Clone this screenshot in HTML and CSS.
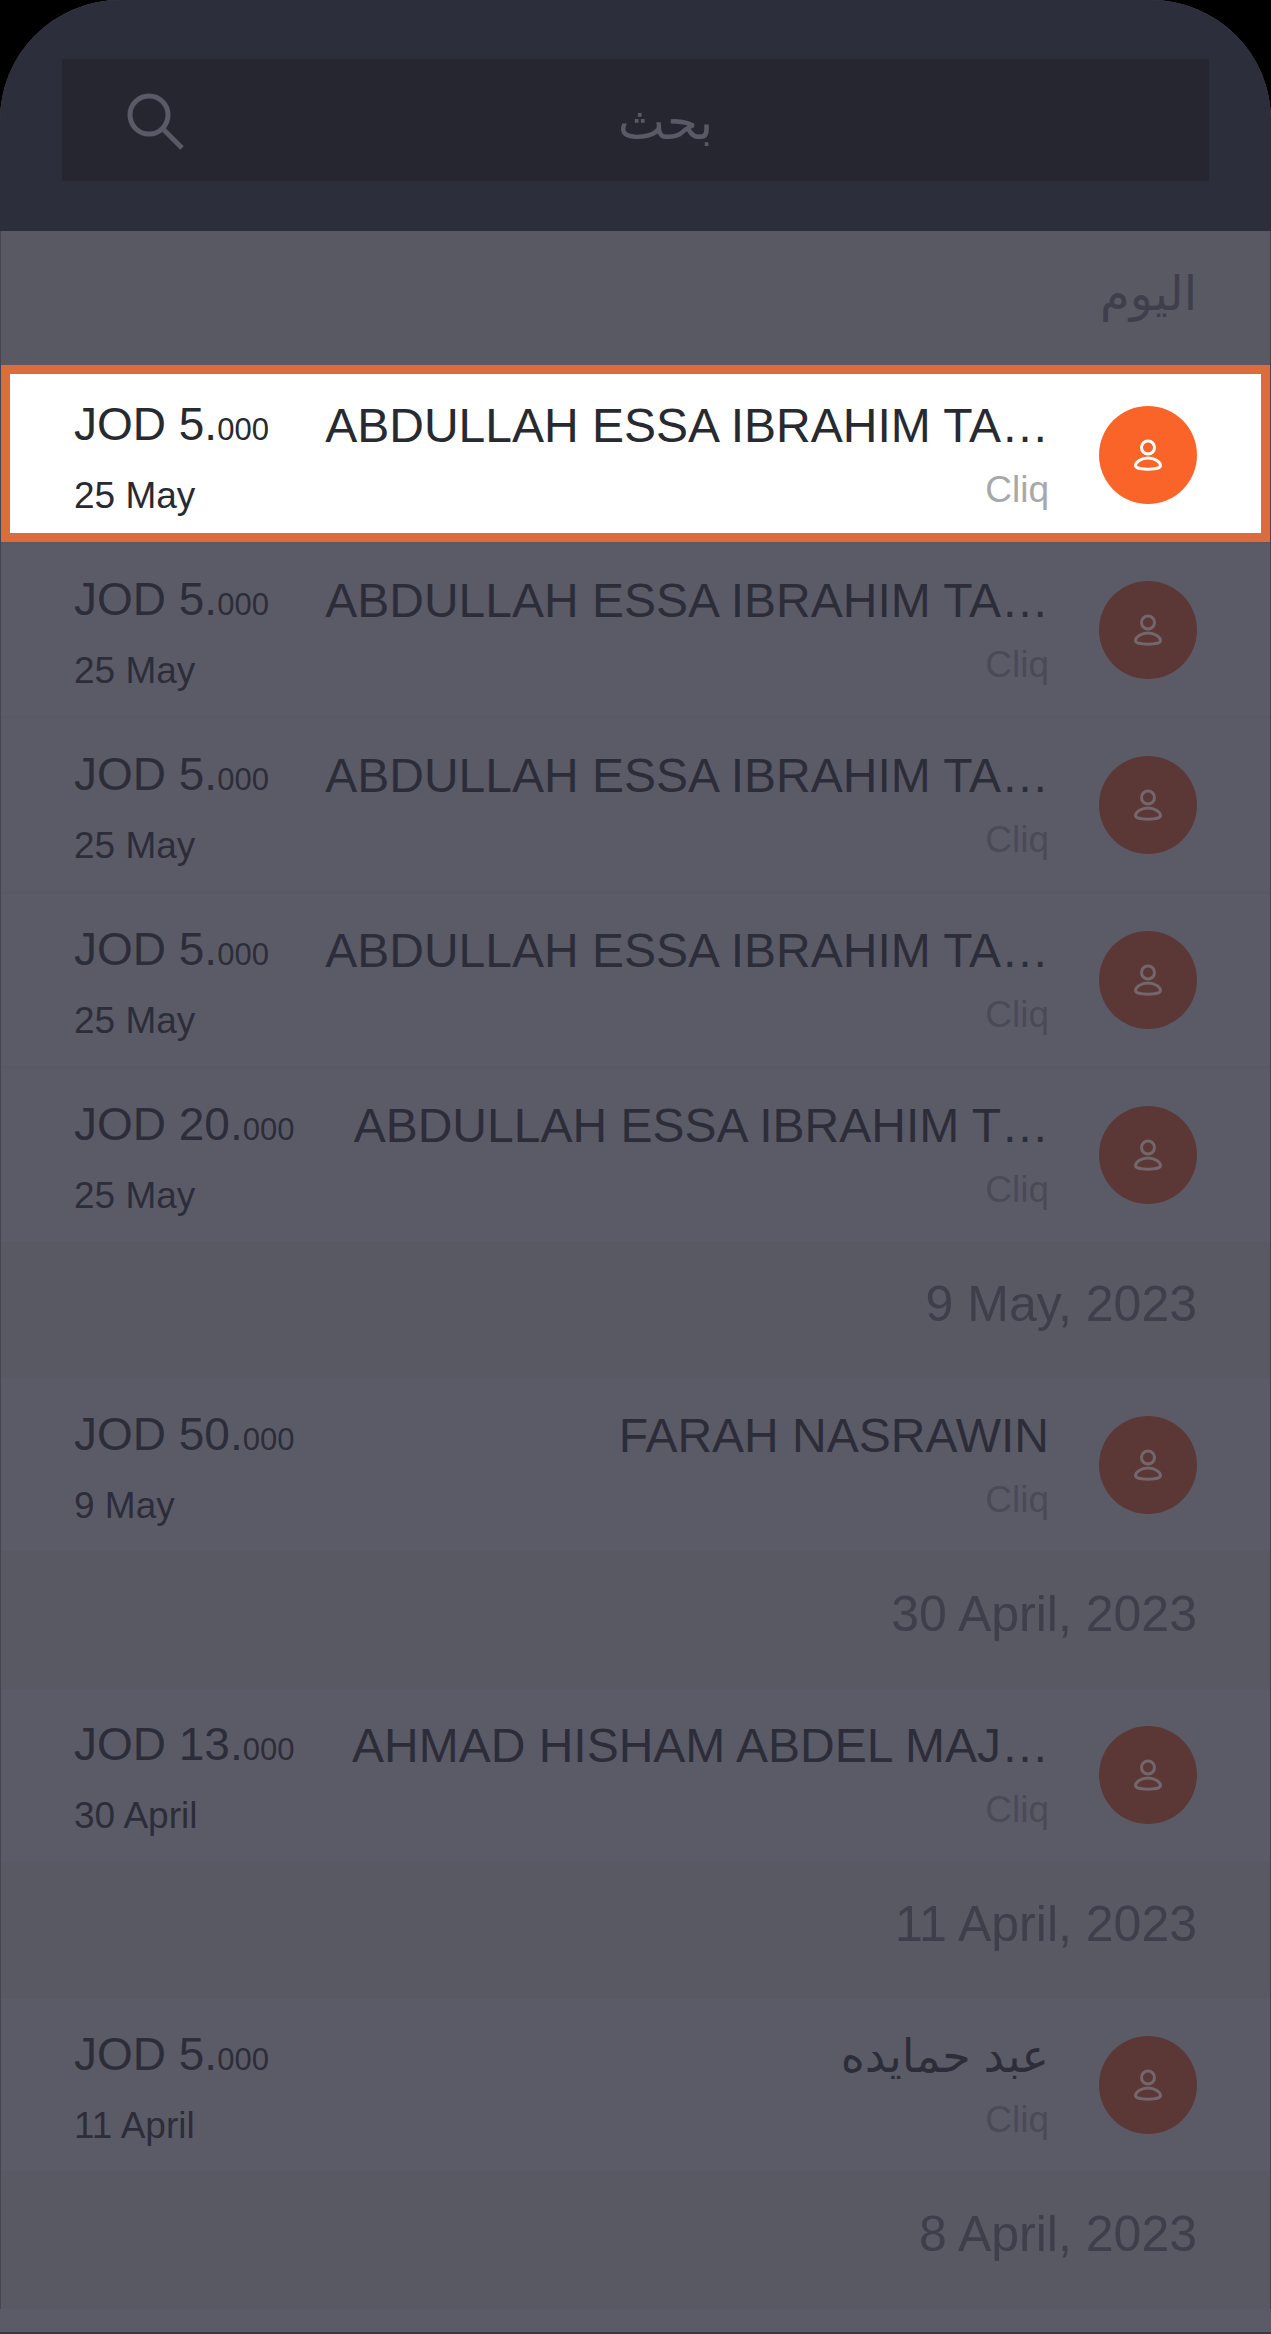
FILE: index.html
```html
<!DOCTYPE html>
<html lang="ar">
    <head>
        <meta charset="utf-8">
        <meta name="viewport" content="width=device-width, initial-scale=1">
        <title>Transactions</title>
        <link rel="stylesheet" href="styles.css">
    </head>
    <body>
        <svg width="0" height="0" class="sprite" aria-hidden="true">
            <symbol id="person" viewBox="0 0 98 98">
                <circle cx="49" cy="41.5" r="6.5"/>
                <path d="M36.5 59.5C36.5 56 42 52 49 52S61.5 56 61.5 59.5C61.5 62 56 63.2 49 63.2S36.5 62 36.5 59.5Z"/>
            </symbol>
        </svg>

        <div class="screen">
            <header class="header">
                <label class="search">
                    <svg class="search-icon" viewBox="0 0 60 60" aria-hidden="true">
                        <circle cx="23" cy="25" r="19"/>
                        <path d="M37 39L56 58"/>
                    </svg>
                    <input class="search-input" type="text" dir="rtl" placeholder="بحث" aria-label="بحث">
                </label>
            </header>

            <main class="history">
                <h2 class="day" dir="rtl">اليوم</h2>
                <ul class="transactions">
                    <li class="transaction selected">
                        <div class="payment">
                            <span class="amount">JOD 5.<small>000</small></span>
                            <span class="date">25 May</span>
                        </div>
                        <div class="person">
                            <span class="name">ABDULLAH ESSA IBRAHIM TA…</span>
                            <span class="type">Cliq</span>
                        </div>
                        <svg class="avatar"><use href="#person"/></svg>
                    </li>
                    <li class="transaction">
                        <div class="payment">
                            <span class="amount">JOD 5.<small>000</small></span>
                            <span class="date">25 May</span>
                        </div>
                        <div class="person">
                            <span class="name">ABDULLAH ESSA IBRAHIM TA…</span>
                            <span class="type">Cliq</span>
                        </div>
                        <svg class="avatar"><use href="#person"/></svg>
                    </li>
                    <li class="transaction">
                        <div class="payment">
                            <span class="amount">JOD 5.<small>000</small></span>
                            <span class="date">25 May</span>
                        </div>
                        <div class="person">
                            <span class="name">ABDULLAH ESSA IBRAHIM TA…</span>
                            <span class="type">Cliq</span>
                        </div>
                        <svg class="avatar"><use href="#person"/></svg>
                    </li>
                    <li class="transaction">
                        <div class="payment">
                            <span class="amount">JOD 5.<small>000</small></span>
                            <span class="date">25 May</span>
                        </div>
                        <div class="person">
                            <span class="name">ABDULLAH ESSA IBRAHIM TA…</span>
                            <span class="type">Cliq</span>
                        </div>
                        <svg class="avatar"><use href="#person"/></svg>
                    </li>
                    <li class="transaction">
                        <div class="payment">
                            <span class="amount">JOD 20.<small>000</small></span>
                            <span class="date">25 May</span>
                        </div>
                        <div class="person">
                            <span class="name">ABDULLAH ESSA IBRAHIM T…</span>
                            <span class="type">Cliq</span>
                        </div>
                        <svg class="avatar"><use href="#person"/></svg>
                    </li>
                </ul>

                <h2 class="day">9 May, 2023</h2>
                <ul class="transactions">
                    <li class="transaction">
                        <div class="payment">
                            <span class="amount">JOD 50.<small>000</small></span>
                            <span class="date">9 May</span>
                        </div>
                        <div class="person">
                            <span class="name">FARAH NASRAWIN</span>
                            <span class="type">Cliq</span>
                        </div>
                        <svg class="avatar"><use href="#person"/></svg>
                    </li>
                </ul>

                <h2 class="day">30 April, 2023</h2>
                <ul class="transactions">
                    <li class="transaction">
                        <div class="payment">
                            <span class="amount">JOD 13.<small>000</small></span>
                            <span class="date">30 April</span>
                        </div>
                        <div class="person">
                            <span class="name">AHMAD HISHAM ABDEL MAJ…</span>
                            <span class="type">Cliq</span>
                        </div>
                        <svg class="avatar"><use href="#person"/></svg>
                    </li>
                </ul>

                <h2 class="day">11 April, 2023</h2>
                <ul class="transactions">
                    <li class="transaction">
                        <div class="payment">
                            <span class="amount">JOD 5.<small>000</small></span>
                            <span class="date">11 April</span>
                        </div>
                        <div class="person">
                            <span class="name arabic" dir="rtl">عبد حمايده</span>
                            <span class="type">Cliq</span>
                        </div>
                        <svg class="avatar"><use href="#person"/></svg>
                    </li>
                </ul>

                <h2 class="day">8 April, 2023</h2>
            </main>
        </div>
    </body>
</html>
```
FILE: styles.css
```css
* {
    box-sizing: border-box;
}

body {
    margin: 0;
    background-color: #000;
    font-family: "Liberation Sans", "DejaVu Sans", sans-serif;
    color: #2d2d3a;
}

.sprite {
    position: absolute;
}

.screen {
    min-height: 100vh;
    background-color: #5b5b67;
    border-bottom: 2px solid #3a3a47;
    border-radius: 120px 120px 0 0;
}

/* search */

.header {
    padding: 59px 62px 50px;
    background-color: #2d2e3b;
    border-radius: 120px 120px 0 0;
}

.search {
    display: flex;
    align-items: center;
    height: 122px;
    padding: 0 64px;
    background-color: #262631;
}

.search-icon {
    flex: none;
    width: 60px;
    height: 60px;
    fill: none;
    stroke: #5a5a66;
    stroke-width: 5;
}

.search-input {
    flex: 1;
    min-width: 0;
    padding: 4px 0 0;
    border: 0;
    outline: 0;
    background: none;
    color: #5a5a66;
    font-family: inherit;
    font-size: 50px;
    text-align: center;
}

.search-input::placeholder {
    color: #5a5a66;
    opacity: 1;
}

/* list */

.history {
    border: solid #454552;
    border-width: 0 1px;
}

.day {
    height: 138px;
    margin: 0;
    padding: 0 73px;
    background-color: #595964;
    color: #3f3f4c;
    font-size: 50px;
    font-weight: normal;
    line-height: 126px;
    text-align: right;
}

.day[dir="rtl"] {
    font-size: 48px;
    text-align: start;
}

.transactions {
    display: flex;
    flex-direction: column;
    gap: 3px;
    margin: 0;
    padding: 0;
    background-color: #595964;
    list-style: none;
}

.transaction {
    display: flex;
    align-items: center;
    gap: 50px;
    height: 172px;
    padding: 0 73px;
    background-color: #5b5b67;
    white-space: nowrap;
}

.payment {
    display: flex;
    flex-direction: column;
    gap: 12px;
    padding-top: 4px;
}

.amount {
    font-size: 46px;
    line-height: 60px;
}

.amount small {
    font-size: 31px;
}

.date {
    font-size: 37px;
    line-height: 48px;
}

.person {
    display: flex;
    flex: 1;
    flex-direction: column;
    gap: 12px;
    min-width: 0;
    padding-top: 2px;
    text-align: right;
}

.name {
    font-size: 48px;
    line-height: 56px;
}

.name.arabic {
    font-size: 46px;
    text-align: start;
}

.type {
    color: #4a4a56;
    font-size: 37px;
    line-height: 48px;
}

.avatar {
    flex: none;
    width: 98px;
    height: 98px;
    border-radius: 50%;
    background-color: #5b3836;
    fill: none;
    stroke: #73666c;
    stroke-width: 3;
}

/* the highlighted transaction */

.selected {
    position: relative;
    background-color: #fff;
    color: #272a30;
}

.selected::after {
    content: "";
    position: absolute;
    inset: -4px 0 -1px;
    border: 9px solid #dd6c3b;
}

.selected .type {
    color: #a8a8ab;
}

.selected .avatar {
    background-color: #fa6428;
    stroke: #fff;
}
```
